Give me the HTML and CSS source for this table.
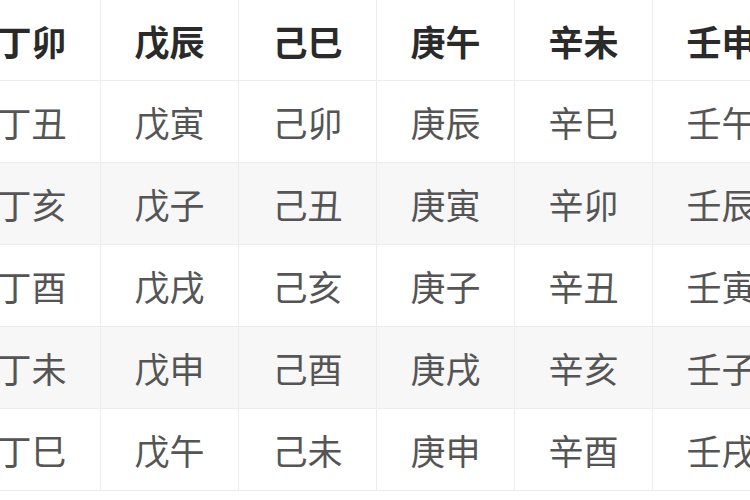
FILE: index.html
```html
<!DOCTYPE html>
<html lang="zh">
<head>
<meta charset="utf-8">
<link rel="stylesheet" href="styles.css">
</head>
<body>
<table class="ganzhi">
<thead>
<tr><th>丁卯</th><th>戊辰</th><th>己巳</th><th>庚午</th><th>辛未</th><th>壬申</th></tr>
</thead>
<tbody>
<tr><td>丁丑</td><td>戊寅</td><td>己卯</td><td>庚辰</td><td>辛巳</td><td>壬午</td></tr>
<tr class="alt"><td>丁亥</td><td>戊子</td><td>己丑</td><td>庚寅</td><td>辛卯</td><td>壬辰</td></tr>
<tr><td>丁酉</td><td>戊戌</td><td>己亥</td><td>庚子</td><td>辛丑</td><td>壬寅</td></tr>
<tr class="alt"><td>丁未</td><td>戊申</td><td>己酉</td><td>庚戌</td><td>辛亥</td><td>壬子</td></tr>
<tr><td>丁巳</td><td>戊午</td><td>己未</td><td>庚申</td><td>辛酉</td><td>壬戌</td></tr>
</tbody>
</table>
</body>
</html>
```
FILE: styles.css
```css
html, body {
  margin: 0;
  padding: 0;
  background: #ffffff;
  overflow: hidden;
}
body {
  width: 750px;
  height: 500px;
  font-family: "Noto Sans CJK SC", "Noto Sans", sans-serif;
}
.ganzhi {
  border-collapse: collapse;
  table-layout: fixed;
  margin-left: -38px;
  width: 826px;
}
.ganzhi th,
.ganzhi td {
  width: 137px;
  padding: 0;
  text-align: center;
  vertical-align: middle;
  border: 1px solid #ececec;
  font-size: 35px;
  line-height: 1;
}
.ganzhi th {
  height: 80px;
  border-top: none;
  font-weight: bold;
  color: #2a2a2a;
}
.ganzhi td {
  height: 81px;
  color: #555555;
  font-weight: normal;
}
.ganzhi tr.alt td {
  background: #f7f7f8;
}
```
